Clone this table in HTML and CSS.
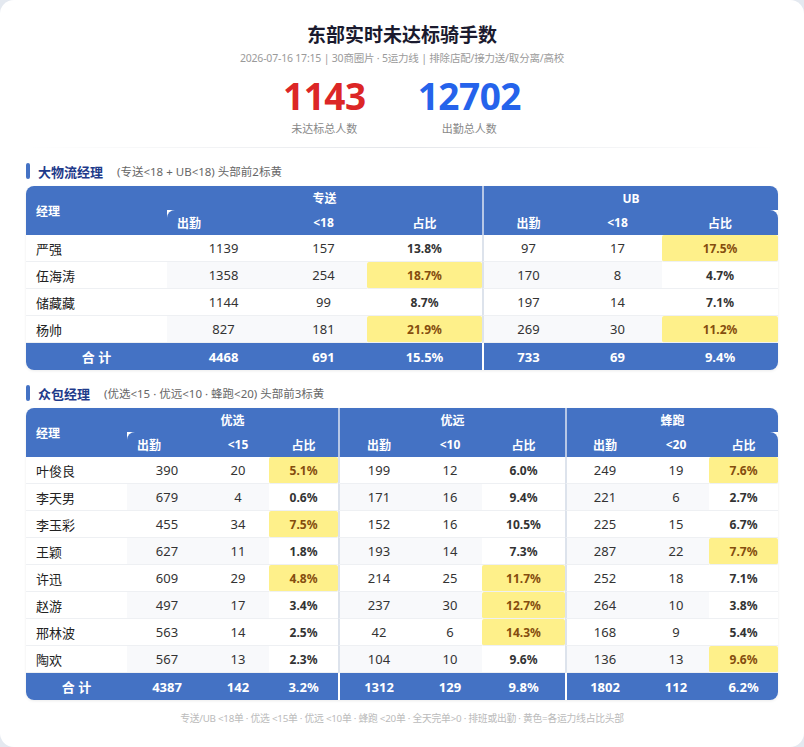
FILE: index.html
```html
<!DOCTYPE html>
<html lang="zh">
<head>
<meta charset="utf-8">
<title>东部实时未达标骑手数</title>
<link rel="stylesheet" href="styles.css">
</head>
<body>
<div class="card">
  <h1 class="title">东部实时未达标骑手数</h1>
  <div class="sub">2026-07-16 17:15 | 30商圈片 · 5运力线 | 排除店配/接力送/取分离/高校</div>
  <div class="stats">
    <div class="stat"><div class="num red">1143</div><div class="lbl">未达标总人数</div></div>
    <div class="stat"><div class="num blue">12702</div><div class="lbl">出勤总人数</div></div>
  </div>
  <div class="divider"></div>

  <div class="sec-head"><span class="bar"></span><span class="sec-title">大物流经理</span><span class="sec-sub">(专送&lt;18 + UB&lt;18) 头部前2标黄</span></div>
  <div class="tbl-wrap">
    <table>
      <colgroup>
        <col style="width:141px"><col style="width:113px"><col style="width:87px"><col style="width:115px">
        <col style="width:91px"><col style="width:89px"><col style="width:116px">
      </colgroup>
      <thead>
        <tr class="h1"><th rowspan="2" class="name-h">经理</th><th colspan="3">专送</th><th colspan="3" class="g">UB</th></tr>
        <tr class="h2"><th class="odd-first">出勤</th><th>&lt;18</th><th>占比</th><th class="g">出勤</th><th>&lt;18</th><th class="odd-last">占比</th></tr>
      </thead>
      <tbody>
        <tr><td class="nm">严强</td><td>1139</td><td>157</td><td class="pc">13.8%</td><td class="g">97</td><td>17</td><td class="pc hi">17.5%</td></tr>
        <tr class="ev"><td class="nm">伍海涛</td><td>1358</td><td>254</td><td class="pc hi">18.7%</td><td class="g">170</td><td>8</td><td class="pc">4.7%</td></tr>
        <tr><td class="nm">储藏藏</td><td>1144</td><td>99</td><td class="pc">8.7%</td><td class="g">197</td><td>14</td><td class="pc">7.1%</td></tr>
        <tr class="ev"><td class="nm">杨帅</td><td>827</td><td>181</td><td class="pc hi">21.9%</td><td class="g">269</td><td>30</td><td class="pc hi">11.2%</td></tr>
        <tr class="tot"><td>合 计</td><td>4468</td><td>691</td><td>15.5%</td><td class="g">733</td><td>69</td><td>9.4%</td></tr>
      </tbody>
    </table>
  </div>

  <div class="sec-head"><span class="bar"></span><span class="sec-title">众包经理</span><span class="sec-sub">(优选&lt;15 · 优远&lt;10 · 蜂跑&lt;20) 头部前3标黄</span></div>
  <div class="tbl-wrap">
    <table>
      <colgroup>
        <col style="width:101px"><col style="width:80px"><col style="width:62px"><col style="width:69px">
        <col style="width:80px"><col style="width:64px"><col style="width:83px">
        <col style="width:78px"><col style="width:66px"><col style="width:69px">
      </colgroup>
      <thead>
        <tr class="h1"><th rowspan="2" class="name-h">经理</th><th colspan="3">优选</th><th colspan="3" class="g">优远</th><th colspan="3" class="g">蜂跑</th></tr>
        <tr class="h2"><th class="odd-first">出勤</th><th>&lt;15</th><th>占比</th><th class="g">出勤</th><th>&lt;10</th><th>占比</th><th class="g">出勤</th><th>&lt;20</th><th class="odd-last">占比</th></tr>
      </thead>
      <tbody>
        <tr><td class="nm">叶俊良</td><td>390</td><td>20</td><td class="pc hi">5.1%</td><td class="g">199</td><td>12</td><td class="pc">6.0%</td><td class="g">249</td><td>19</td><td class="pc hi">7.6%</td></tr>
        <tr class="ev"><td class="nm">李天男</td><td>679</td><td>4</td><td class="pc">0.6%</td><td class="g">171</td><td>16</td><td class="pc">9.4%</td><td class="g">221</td><td>6</td><td class="pc">2.7%</td></tr>
        <tr><td class="nm">李玉彩</td><td>455</td><td>34</td><td class="pc hi">7.5%</td><td class="g">152</td><td>16</td><td class="pc">10.5%</td><td class="g">225</td><td>15</td><td class="pc">6.7%</td></tr>
        <tr class="ev"><td class="nm">王颖</td><td>627</td><td>11</td><td class="pc">1.8%</td><td class="g">193</td><td>14</td><td class="pc">7.3%</td><td class="g">287</td><td>22</td><td class="pc hi">7.7%</td></tr>
        <tr><td class="nm">许迅</td><td>609</td><td>29</td><td class="pc hi">4.8%</td><td class="g">214</td><td>25</td><td class="pc hi">11.7%</td><td class="g">252</td><td>18</td><td class="pc">7.1%</td></tr>
        <tr class="ev"><td class="nm">赵游</td><td>497</td><td>17</td><td class="pc">3.4%</td><td class="g">237</td><td>30</td><td class="pc hi">12.7%</td><td class="g">264</td><td>10</td><td class="pc">3.8%</td></tr>
        <tr><td class="nm">邢林波</td><td>563</td><td>14</td><td class="pc">2.5%</td><td class="g">42</td><td>6</td><td class="pc hi">14.3%</td><td class="g">168</td><td>9</td><td class="pc">5.4%</td></tr>
        <tr class="ev"><td class="nm">陶欢</td><td>567</td><td>13</td><td class="pc">2.3%</td><td class="g">104</td><td>10</td><td class="pc">9.6%</td><td class="g">136</td><td>13</td><td class="pc hi">9.6%</td></tr>
        <tr class="tot"><td>合 计</td><td>4387</td><td>142</td><td>3.2%</td><td class="g">1312</td><td>129</td><td>9.8%</td><td class="g">1802</td><td>112</td><td>6.2%</td></tr>
      </tbody>
    </table>
  </div>

  <div class="foot">专送/UB &lt;18单 · 优选 &lt;15单 · 优远 &lt;10单 · 蜂跑 &lt;20单 · 全天完单&gt;0 · 排班或出勤 · 黄色=各运力线占比头部</div>
</div>
</body>
</html>
```

FILE: styles.css
```css
* { box-sizing: border-box; margin: 0; padding: 0; }
html, body { background: #e4e9f0; }
body {
  font-family: "Noto Sans", "Noto Sans CJK SC", sans-serif;
  color: #333;
}
.card {
  width: 804px;
  height: 747px;
  background: #fff;
  border-radius: 14px;
  padding: 22px 26px 0;
}
.title {
  text-align: center;
  font-size: 19px;
  font-weight: 700;
  color: #1a1a2e;
  line-height: 26px;
}
.sub {
  text-align: center;
  font-size: 10.5px;
  letter-spacing: -0.2px;
  color: #9a9a9a;
  line-height: 16px;
  margin-top: 2px;
}
.stats {
  display: flex;
  justify-content: center;
  gap: 52px;
  margin-top: 9px;
}
.stat { text-align: center; }
.num {
  font-size: 37px;
  font-weight: 700;
  line-height: 42px;
  letter-spacing: -0.5px;
}
.red { color: #dc2626; }
.blue { color: #2563eb; }
.lbl {
  font-size: 11px;
  color: #888;
  line-height: 14px;
  margin-top: 5px;
}
.divider {
  height: 1px;
  margin-top: 11px;
  background: linear-gradient(90deg, rgba(229,231,235,0), #e5e7eb 50%, rgba(229,231,235,0));
}
.sec-head {
  display: flex;
  align-items: center;
  height: 16px;
  margin-top: 15px;
  margin-bottom: 7px;
}
.bar {
  width: 4px;
  height: 16px;
  border-radius: 2px;
  background: #4472c4;
  margin-right: 8px;
}
.sec-title {
  font-size: 13px;
  font-weight: 700;
  color: #1e3a8a;
}
.sec-sub {
  font-size: 11.5px;
  color: #666;
  margin-left: 14px;
}
.tbl-wrap {
  border-radius: 8px;
  overflow: hidden;
  box-shadow: 0 1px 3px rgba(0, 0, 0, 0.08);
}
table {
  width: 752px;
  border-collapse: separate;
  border-spacing: 0;
  table-layout: fixed;
}
th {
  background: #4472c4;
  color: #fff;
  font-size: 12px;
  font-weight: 700;
  text-align: center;
  padding: 0;
}
.h1 th { height: 24px; }
.h2 th { height: 25px; }
th.name-h, th.odd-first {
  text-align: left;
  padding-left: 10px;
}
th.odd-first { border-top-left-radius: 8px; }
th.odd-last { border-top-right-radius: 8px; }
th.g { border-left: 2px solid #b7c7e6; }
td {
  height: 27px;
  padding: 0;
  text-align: center;
  font-size: 13px;
  color: #333;
  border-bottom: 1px solid #eef0f3;
  background: #fff;
}
tr.ev td { background: #f8f9fb; }
td.g { border-left: 2px solid #dde3ec; }
td.nm, tr.ev td.nm {
  text-align: left;
  padding-left: 10px;
  color: #222;
  background: #fff;
}
td.pc, tr.ev td.pc {
  font-size: 12px;
  font-weight: 700;
  color: #333;
  background: #fff;
}
td.hi, tr.ev td.hi {
  background: #fef08a;
  color: #854d0e;
  border-radius: 2px;
}
tr.tot td {
  background: #4472c4;
  color: #fff;
  font-weight: 700;
  font-size: 13px;
  border-bottom: none;
}
tr.tot td.g { border-left: 2px solid #fff; }
.foot {
  margin-top: 12px;
  text-align: center;
  font-size: 9.8px;
  letter-spacing: -0.25px;
  line-height: 14px;
  color: #bbb;
}
```
